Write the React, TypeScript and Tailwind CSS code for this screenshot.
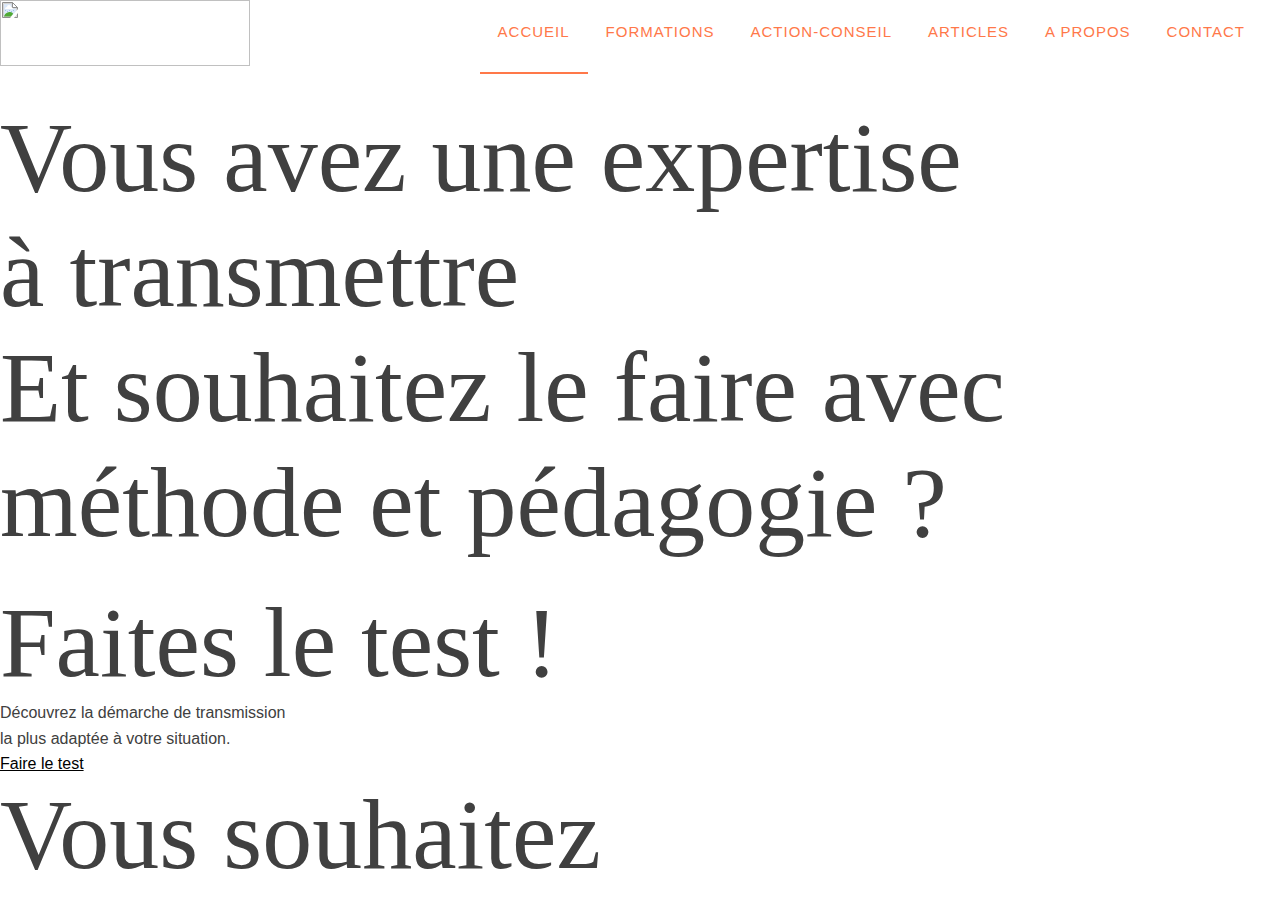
import React from 'react';

const navItems = [
  { label: 'ACCUEIL', href: '#accueil', active: true },
  { label: 'FORMATIONS', href: '#formations' },
  { label: 'ACTION-CONSEIL', href: '#action-conseil' },
  { label: 'ARTICLES', href: '#articles' },
  { label: 'A PROPOS', href: '#a-propos' },
  { label: 'CONTACT', href: '#contact' },
];

const displayTitle = 'font-["Liberation_Serif",serif] text-[100px] leading-[115px] text-[#404040]';

function Logo() {
  return (
    <a href="#accueil" aria-label="Accueil" className="block h-[66px] w-[250px] border border-[#c0c0c0]">
      <svg width="16" height="16" viewBox="0 0 16 16" className="m-px" aria-hidden="true">
        <path d="M0.5 0.5H10.5L15.5 5.5V15.5H0.5Z" fill="#ffffff" stroke="#8f8f8f" />
        <path d="M1.5 1.5H10V6H14.5V14.5H1.5Z" fill="#dbe8f9" stroke="#d4d4d4" />
        <path d="M3 7a2 2 0 0 1 2-2 2 2 0 0 1 4 0 2 2 0 0 1 2 2Z" fill="#ffffff" />
        <path d="M3 8H4V9H3ZM5 9H6V10H5ZM7 8H8V9H7ZM9 9H10V10H9ZM11 8H12V9H11Z" fill="#9fc0e8" />
        <path d="M10.5 0.5V5.5H15.5Z" fill="#ffffff" stroke="#8f8f8f" />
        <path d="M2 14.5C3 11 6 10 8 10C10 10 11 11 11 12L9 14.5Z" fill="#4faa35" />
        <path d="M8 16L16 7V11L12 16Z" fill="#ffffff" />
      </svg>
    </a>
  );
}

export default function App() {
  return (
    <div className='min-h-screen bg-white font-["Liberation_Sans",sans-serif] text-base text-[#404040]'>
      <header className="flex items-start justify-between">
        <Logo />
        <nav className="flex pr-[17px]">
          {navItems.map((item) => (
            <a
              key={item.label}
              href={item.href}
              className={`border-b-2 px-[18px] pt-5 pb-7 text-[15px] leading-6 tracking-[1px] text-[#ff7849] ${
                item.active ? 'border-[#ff7849]' : 'border-transparent'
              }`}
            >
              {item.label}
            </a>
          ))}
        </nav>
      </header>

      <main className="pt-[26px]">
        <h1 className={displayTitle}>
          Vous avez une expertise
          <br />
          à transmettre
          <br />
          Et souhaitez le faire avec
          <br />
          méthode et pédagogie ?
        </h1>

        <h2 className={`${displayTitle} mt-[25px]`}>Faites le test !</h2>
        <p className="leading-[26px]">
          Découvrez la démarche de transmission
          <br />
          la plus adaptée à votre situation.
        </p>
        <a href="#test" className="block pb-px leading-6 text-black underline">
          Faire le test
        </a>

        <h2 className={displayTitle}>Vous souhaitez</h2>
      </main>
    </div>
  );
}
